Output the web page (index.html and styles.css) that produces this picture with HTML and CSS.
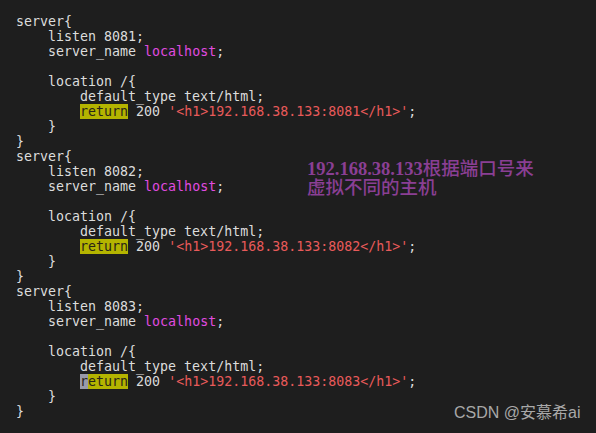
FILE: index.html
```html
<!DOCTYPE html>
<html>
<head>
<meta charset="utf-8">
<link rel="stylesheet" href="styles.css">
</head>
<body>
<div class="screen">
<pre class="code">server{
    listen 8081;
    server_name <span class="kw">localhost</span>;

    location /{
        default_type text/html;
        <span class="hl">return</span> 200 <span class="str">'&lt;h1&gt;192.168.38.133:8081&lt;/h1&gt;'</span>;
    }
}
server{
    listen 8082;
    server_name <span class="kw">localhost</span>;

    location /{
        default_type text/html;
        <span class="hl">return</span> 200 <span class="str">'&lt;h1&gt;192.168.38.133:8082&lt;/h1&gt;'</span>;
    }
}
server{
    listen 8083;
    server_name <span class="kw">localhost</span>;

    location /{
        default_type text/html;
        <span class="cur">r</span><span class="hl">eturn</span> 200 <span class="str">'&lt;h1&gt;192.168.38.133:8083&lt;/h1&gt;'</span>;
    }
}</pre>
<div class="note">192.168.38.133<span class="cjk">根据端口号来</span><br><span class="cjk">虚拟不同的主机</span></div>
<div class="mark">CSDN @安慕希ai</div>
</div>
</body>
</html>
```
FILE: styles.css
```css
html, body {
  margin: 0;
  padding: 0;
  background: #1e1e1e;
}
.screen {
  position: relative;
  width: 596px;
  height: 433px;
  overflow: hidden;
  background: #1e1e1e;
}
.code {
  margin: 0;
  padding: 14px 0 0 16px;
  font-family: "DejaVu Sans Mono", "Liberation Mono", monospace;
  font-size: 13.3px;
  line-height: 15px;
  color: #dcdcdc;
}
.kw { color: #e04be0; }
.str { color: #e85a5a; }
.hl, .cur {
  display: inline-block;
  line-height: 15px;
  height: 15px;
  color: #2a2418;
}
.hl { background: #b4b400; }
.cur { background: #9a9aa8; }
.note {
  position: absolute;
  left: 307px;
  top: 160px;
  font-family: "Liberation Serif", "Noto Sans CJK SC", serif;
  font-weight: bold;
  font-size: 18.5px;
  line-height: 19px;
  color: #8a3f94;
}
.cjk { font-weight: 500; }
.mark {
  position: absolute;
  left: 454px;
  top: 403px;
  font-family: "Liberation Sans", "Noto Sans CJK SC", sans-serif;
  font-size: 16px;
  line-height: 20px;
  color: #a8a8a8;
}
```
